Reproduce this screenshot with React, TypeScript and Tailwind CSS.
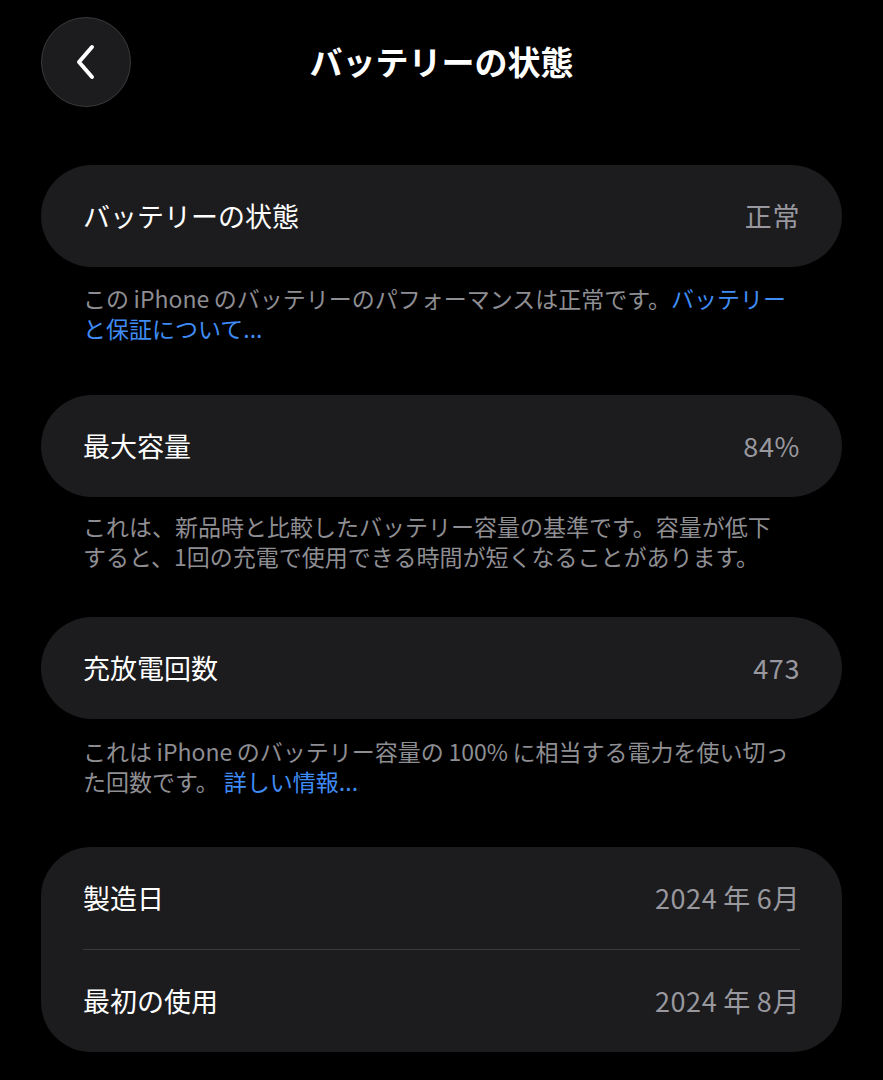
import React from "react";

interface Section {
  label: string;
  value: string;
  lines: React.ReactNode[];
  footerTop: string;
  gapAfter: string;
}

const font = { fontFamily: '"Noto Sans CJK JP", "Noto Sans", sans-serif' };

const Link = ({ children }: { children: React.ReactNode }) => (
  <span className="text-[#3f8cf6]">{children}</span>
);

const sections: Section[] = [
  {
    label: "バッテリーの状態",
    value: "正常",
    lines: [
      <>
        この{"\u2009"}iPhone{"\u2009"}のバッテリーのパフォーマンスは正常です。
        <Link>バッテリー</Link>
      </>,
      <Link>と保証について...</Link>,
    ],
    footerTop: "mt-[16px]",
    gapAfter: "mb-[52px]",
  },
  {
    label: "最大容量",
    value: "84%",
    lines: [
      "これは、新品時と比較したバッテリー容量の基準です。容量が低下",
      "すると、1回の充電で使用できる時間が短くなることがあります。",
    ],
    footerTop: "mt-[14px]",
    gapAfter: "mb-[46px]",
  },
  {
    label: "充放電回数",
    value: "473",
    lines: [
      <>
        これは{"\u2009"}iPhone{"\u2009"}のバッテリー容量の{"\u2009"}100%
        {"\u2009"}に相当する電力を使い切っ
      </>,
      <>
        た回数です。 <Link>詳しい情報...</Link>
      </>,
    ],
    footerTop: "mt-[17px]",
    gapAfter: "mb-[51px]",
  },
];

const Row = ({ label, value }: { label: string; value: string }) => (
  <div className="flex h-[102px] items-center justify-between">
    <span className="text-[27px] text-white">{label}</span>
    <span className="text-[27px] tracking-[0.6px] text-[#98989e]">{value}</span>
  </div>
);

export default function App() {
  return (
    <div className="min-h-[1080px] bg-black px-[41px] pt-[17px]" style={font}>
      {/* Header */}
      <div className="grid grid-cols-[90px_1fr_90px] items-center">
        <button className="flex h-[90px] w-[90px] items-center justify-center rounded-full border border-[#3a3a3c] bg-[#1c1c1e]">
          <svg width="22" height="36" viewBox="0 0 22 36" fill="none">
            <path
              d="M17 3 L4 18 L17 33"
              stroke="white"
              strokeWidth="4"
              strokeLinecap="round"
              strokeLinejoin="round"
            />
          </svg>
        </button>
        <h1 className="text-center text-[33px] font-bold text-white">
          バッテリーの状態
        </h1>
        <div />
      </div>

      <div className="mt-[58px]">
        {sections.map((s) => (
          <div key={s.label} className={s.gapAfter}>
            <div className="rounded-full bg-[#1c1c1e] px-[42px]">
              <Row label={s.label} value={s.value} />
            </div>
            <div
              className={`${s.footerTop} px-[42px] text-[23px] leading-[30px] text-[#8e8e93]`}
            >
              {s.lines.map((l, i) => (
                <div key={i} className="whitespace-nowrap">
                  {l}
                </div>
              ))}
            </div>
          </div>
        ))}

        {/* Dates */}
        <div className="rounded-[50px] bg-[#1c1c1e] px-[42px]">
          <Row label="製造日" value={"2024\u2009年\u20096月"} />
          <div className="h-px bg-[#3a3a3c]" />
          <Row label="最初の使用" value={"2024\u2009年\u20098月"} />
        </div>
      </div>
    </div>
  );
}
